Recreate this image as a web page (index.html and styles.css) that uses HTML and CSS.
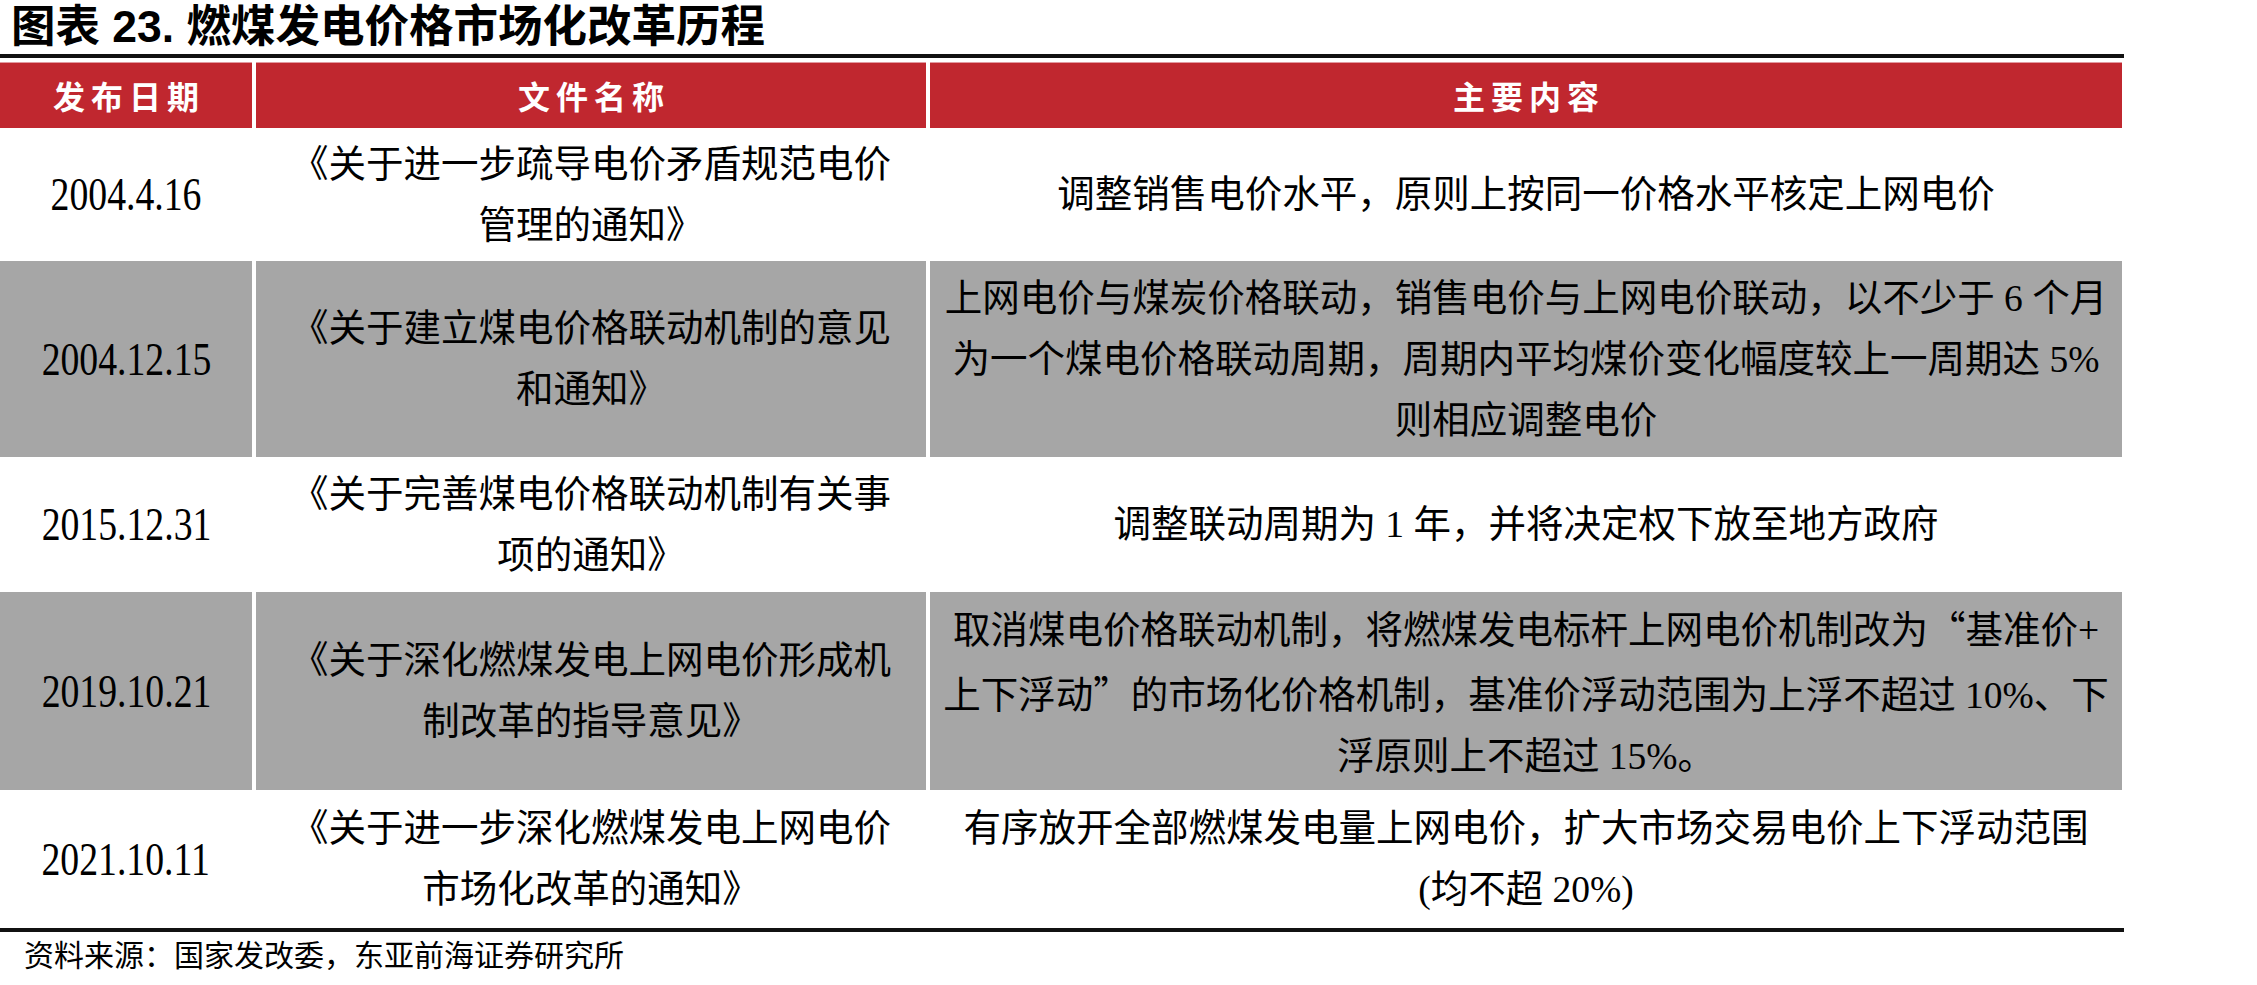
FILE: index.html
```html
<!DOCTYPE html>
<html lang="zh-CN">
<head>
<meta charset="utf-8">
<title>燃煤发电价格市场化改革历程</title>
<link rel="stylesheet" href="styles.css">
</head>
<body>
<div class="page">
  <div class="title">图表 23. 燃煤发电价格市场化改革历程</div>
  <div class="rule"></div>
  <div class="table">
    <div class="cell head">发布日期</div>
    <div class="cell head">文件名称</div>
    <div class="cell head">主要内容</div>

    <div class="cell date"><span>2004.4.16</span></div>
    <div class="cell">《关于进一步疏导电价矛盾规范电价<br>管理的通知》</div>
    <div class="cell">调整销售电价水平，原则上按同一价格水平核定上网电价</div>

    <div class="cell date shade"><span>2004.12.15</span></div>
    <div class="cell shade">《关于建立煤电价格联动机制的意见<br>和通知》</div>
    <div class="cell shade">上网电价与煤炭价格联动，销售电价与上网电价联动，以不少于 6 个月<br>为一个煤电价格联动周期，周期内平均煤价变化幅度较上一周期达 5%<br>则相应调整电价</div>

    <div class="cell date"><span>2015.12.31</span></div>
    <div class="cell">《关于完善煤电价格联动机制有关事<br>项的通知》</div>
    <div class="cell">调整联动周期为 1 年，并将决定权下放至地方政府</div>

    <div class="cell date shade"><span>2019.10.21</span></div>
    <div class="cell shade">《关于深化燃煤发电上网电价形成机<br>制改革的指导意见》</div>
    <div class="cell shade">取消煤电价格联动机制，将燃煤发电标杆上网电价机制改为<span class="q">“</span>基准价+<br>上下浮动<span class="q">”</span>的市场化价格机制，基准价浮动范围为上浮不超过 10%、下<br>浮原则上不超过 15%。</div>

    <div class="cell date"><span>2021.10.11</span></div>
    <div class="cell">《关于进一步深化燃煤发电上网电价<br>市场化改革的通知》</div>
    <div class="cell">有序放开全部燃煤发电量上网电价，扩大市场交易电价上下浮动范围<br>(均不超 20%)</div>
  </div>
  <div class="rule"></div>
  <div class="source">资料来源：国家发改委，东亚前海证券研究所</div>
</div>
</body>
</html>
```
FILE: styles.css
```css
html, body {
  margin: 0;
  padding: 0;
  background: #ffffff;
}

body {
  font-family: "Liberation Serif", "Noto Sans CJK SC", serif;
  color: #000000;
}

.page {
  width: 2124px;
}

.title {
  height: 54px;
  line-height: 54px;
  padding-left: 11px;
  font-family: "Liberation Sans", "Noto Sans CJK SC", sans-serif;
  font-weight: 700;
  font-size: 44.5px;
  white-space: nowrap;
}

.rule {
  height: 4px;
  background: #111111;
}

.table {
  width: 2122px;
  margin-top: 4px;
  display: grid;
  grid-template-columns: 252px 670px 1192px;
  grid-template-rows: 66px 133px 196px 135px 198px 138px;
  column-gap: 4px;
}

.cell {
  display: flex;
  align-items: center;
  justify-content: center;
  text-align: center;
  font-size: 37.5px;
  line-height: 61px;
  white-space: nowrap;
}

.cell > span {
  display: contents;
}

.head {
  background: #c0272f;
  color: #ffffff;
  font-family: "Noto Sans CJK SC", sans-serif;
  font-weight: 700;
  font-size: 32px;
  letter-spacing: 6px;
  padding-left: 6px;
  box-shadow: inset 0 1px 0 #e29aa0;
}

.shade {
  background: #a6a6a6;
}

.cell .q {
  font-family: "Noto Sans CJK SC", sans-serif;
}

.date span {
  display: inline-block;
  font-size: 46px;
  transform: scaleX(0.82);
}

.source {
  height: 42px;
  line-height: 42px;
  padding-left: 24px;
  font-family: "Noto Sans CJK SC", sans-serif;
  font-size: 30px;
  white-space: nowrap;
}
```
